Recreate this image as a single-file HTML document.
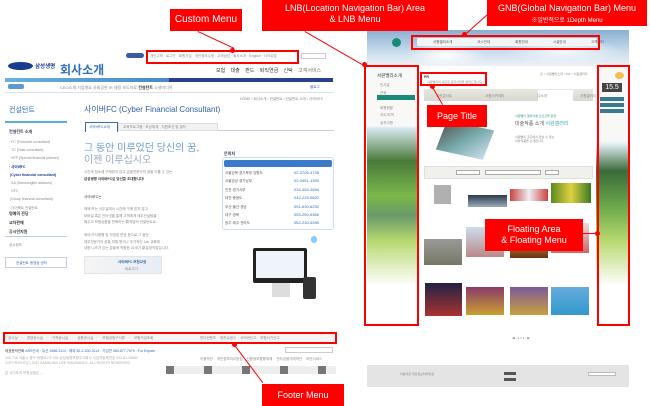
<!DOCTYPE html>
<html><head><meta charset="utf-8">
<style>
*{margin:0;padding:0;box-sizing:border-box}
body{width:650px;height:406px;overflow:hidden;background:#fff;position:relative;font-family:"Liberation Sans","Noto Sans CJK KR",sans-serif;color:#555}
.a{position:absolute}
.lab{position:absolute;background:#f00;color:#fff;text-align:center;font-size:10px;line-height:11px}
.rb{position:absolute;border:2px solid #f00}
.t{position:absolute;font-size:3.5px;color:#888;white-space:nowrap}
.ln{position:absolute;height:1px;background:#f00;transform-origin:0 0}
.dot{position:absolute;width:5px;height:5px;border-radius:50%;background:#f00}
</style></head><body>

<!-- LEFT SCREENSHOT -->
<div class="a" style="left:8px;top:62px;width:25px;height:8px;background:#1a3c8f;border-radius:50%"></div>
<div class="a" style="left:35px;top:62px;font-size:5.5px;color:#1a3c8f;font-weight:bold">삼성생명</div>
<div class="a" style="left:60px;top:61px;font-size:12px;color:#2f6fbf;font-weight:bold">회사소개</div>
<div class="a" style="left:126px;top:53px;width:18px;height:5px;background:#3a5aa8;border-radius:3px"></div>
<div class="t" style="left:150px;top:54px">개인고객 · 로그인 · 회원가입 · 개인정보수정 · 고객상담 · 회사소개 · English · 사이트맵</div>
<div class="a" style="left:301px;top:53px;width:25px;height:6px;border:1px solid #ccd"></div>
<div class="a" style="left:216px;top:67px;font-size:5px;color:#333;word-spacing:4px;white-space:nowrap">보험 대출 펀드 퇴직연금 신탁 <span style="color:#777">고객서비스</span></div>
<div class="a" style="left:5px;top:78px;width:328px;height:4px;background:linear-gradient(90deg,#6ab0e0 0%,#4a88c8 50%,#2a3f90 50%,#2a3f90 100%)"></div>
<div class="a" style="left:8px;top:84px;width:16px;height:5px;background:#5a9ad0;border-radius:2px"></div>
<div class="t" style="left:60px;top:85px;font-size:4px">CEO소개 기업개요 사회공헌 IR 채용 보도자료 <b style="color:#333">컨설턴트</b> 소셜미디어</div>
<div class="t" style="left:310px;top:85px;color:#36c">블로그</div>
<div class="a" style="left:5px;top:92px;width:328px;height:1px;background:#dde"></div>
<div class="t" style="left:240px;top:97px">HOME › 회사소개 › 컨설턴트 › 컨설턴트 소개 › 사이버FC</div>
<div class="a" style="left:9px;top:105px;font-size:7px;color:#2f6fbf">컨설턴트</div>
<div class="a" style="left:5px;top:121px;width:62px;height:2px;background:#5ab0d8"></div>
<div class="t" style="left:9px;top:129px;color:#335;font-weight:bold;font-size:4px">컨설턴트 소개</div>
<div class="t" style="left:9px;top:138px;line-height:8.2px">· FC (Financial consultant)<br>· TC (Total consultant)<br>· SFP (Special financial planner)<br><b style="color:#1a3c8f">· 사이버FC<br>&nbsp;(Cyber financial consultant)</b><br>· SA (Samsunglife advisors)<br>· GFC<br>&nbsp;(Group financial consultant)<br>· 다이렉트 컨설턴트</div>
<div class="t" style="left:9px;top:209px;color:#333;font-weight:bold;line-height:9px;font-size:4px">명예의 전당<br>교차판매<br>공시인지원</div>
<div class="a" style="left:5px;top:236px;width:62px;height:1px;background:#bcd"></div>
<div class="t" style="left:9px;top:243px">공시정보</div>
<div class="a" style="left:5px;top:257px;width:62px;height:11px;border:1px solid #ccd"></div>
<div class="t" style="left:16px;top:261px;color:#36c">컨설턴트 동영상 센터</div>

<div class="a" style="left:84px;top:104px;font-size:8px;color:#2f5fa8;white-space:nowrap">사이버FC (Cyber Financial Consultant)</div>
<div class="a" style="left:84px;top:121px;width:250px;height:10px;border-bottom:1px solid #ccd"></div>
<div class="a" style="left:85px;top:122px;width:33px;height:10px;border:1px solid #3a6ab0;border-bottom:none;background:#fff"></div>
<div class="t" style="left:89px;top:125px;color:#2f5fa8">사이버FC소개</div>
<div class="a" style="left:118px;top:123px;width:100px;height:8px;background:#f3f3f3;border:1px solid #ddd"></div>
<div class="t" style="left:123px;top:125px">교육프로그램 · 보상체계 · 지원조건 및 절차</div>
<div class="a" style="left:84px;top:143px;font-size:10px;line-height:12px;color:#6a9ad0;white-space:nowrap">그 동안 미루었던 당신의 꿈,<br><span style="color:#9ab">이젠 이루십시오</span></div>
<div class="t" style="left:84px;top:170px">사간과 장소에 구애받지 않고 금융전문가의 꿈을 이룰 수 있는</div>
<div class="t" style="left:84px;top:177px;color:#333;font-weight:bold">삼성생명 사이버FC로 당신을 초대합니다!</div>
<div class="t" style="left:84px;top:195px;color:#333">사이버FC는</div>
<div class="t" style="left:84px;top:206px;line-height:6.5px">재택 또는 사무실에서 시간에 구애 받지 않고<br>모바일 혹은 인터넷을 통해 고객에게 재무컨설팅을<br>해주고 보험상품을 판매하는 新개념의 컨설턴트로.<br><br>육아/가사병행 및 자영업 운영 등으로 그 동안<br>재무전문가의 꿈을 미뤄 왔거나 추가적인 Job 교육에<br>대한 니즈가 있는 분들께 적합한 21세기 新유망직업입니다.</div>
<div class="a" style="left:84px;top:256px;width:78px;height:18px;background:linear-gradient(90deg,#f4f4f4,#e8eef6);border:1px solid #e4e4e4"></div>
<div class="t" style="left:118px;top:260px;color:#2f5fa8;font-weight:bold">사이버FC 보험교실</div>
<div class="t" style="left:125px;top:267px">바로가기</div>

<div class="t" style="left:224px;top:151px;color:#335;font-weight:bold;font-size:4px">문의처</div>
<div class="a" style="left:222px;top:157px;width:112px;height:73px;border:1px solid #cde;border-radius:3px"></div>
<div class="a" style="left:224px;top:160px;width:108px;height:7px;background:#3a7ac8;border-radius:2px"></div>
<div class="t" style="left:225px;top:169px;line-height:8.4px;color:#555">서울강북·경기북부·강원도<br>서울강남·경기남부<br>인천·경기서부<br>대전·충청도<br>부산·울산·경남<br>대구·경북<br>광주·제주·전라도</div>
<div class="t" style="left:294px;top:169px;line-height:8.4px;color:#2f6fbf;font-size:4px">02-3706-3728<br>02-3451-1393<br>032-454-4684<br>042-229-0820<br>051-630-6230<br>053-250-5366<br>062-230-5285</div>
<div class="a" style="left:253px;top:248px;width:54px;height:35px;background:#222;border-radius:2px"></div>
<div class="a" style="left:256px;top:251px;width:48px;height:27px;background:#eef4fa"></div>
<div class="a" style="left:272px;top:283px;width:18px;height:14px;background:#ddd"></div>
<div class="a" style="left:303px;top:277px;width:13px;height:22px;background:#333;border-radius:2px"></div>
<div class="a" style="left:311px;top:236px;width:6px;height:7px;background:#8cf;border-radius:3px"></div>

<div class="a" style="left:5px;top:333px;width:330px;height:10px;background:#f4f4f4"></div>
<div class="t" style="left:8px;top:336px;word-spacing:3px">공시실 · 경영공시실 · 가격공시실 · 상품공시실 · 보험금청구서류 · 보험가입조회</div>
<div class="t" style="left:200px;top:336px;word-spacing:3px">반디컨텐츠 방카슈랑스 사이버신고 보험사기신고</div>
<div class="t" style="left:5px;top:349px;color:#333">대표문의전화 <span style="color:#36c">ARS안내 · 유선 1588-3114 · 해외 82-2-300-3114 · 가입전 080-877-7979 · For Expats</span></div>
<div class="a" style="left:285px;top:347px;width:48px;height:6px;border:1px solid #ccc"></div>
<div class="t" style="left:5px;top:356px;line-height:5px;color:#aaa">100-716 서울시 중구 태평로2가 150 삼성생명보험주식회사 사업자등록번호 202-81-26689<br>COPYRIGHT(C) 2011 SAMSUNG LIFE INSURANCE. ALL RIGHTS RESERVED.<br><br>본 사이트의 보험상품은 ...</div>
<div class="t" style="left:200px;top:357px;word-spacing:3px">이용약관 개인정보처리방침 신용정보활용체제 전자금융거래약관 보안서비스</div>
<div class="a" style="left:166px;top:366px;width:170px;height:8px;background:repeating-linear-gradient(90deg,#777 0 8px,#eee 8px 38px)"></div>

<!-- RIGHT SCREENSHOT -->
<div class="a" style="left:367px;top:30px;width:262px;height:36px;background:radial-gradient(ellipse 40px 12px at 30% 70%,#fff,transparent),radial-gradient(ellipse 60px 14px at 75% 60%,#f4f8fc,transparent),linear-gradient(180deg,#8aaed0,#c8dcec 60%,#eef2f6);"></div>
<div class="a" style="left:392px;top:38px;width:9px;height:9px;border-radius:50%;background:#1a8a78"></div>
<div class="a" style="left:417px;top:38px;width:180px;height:8px;background:#f4f4f4;border-radius:2px"></div>
<div class="t" style="left:433px;top:40px;word-spacing:24px;color:#555">서원밸리소개 코스안내 회원안내 시설안내 고객센터</div>
<div class="a" style="left:367px;top:66px;width:52px;height:260px;background:linear-gradient(180deg,#f8f8f6 0,#f8f8f6 60px,#d8e8f0 62px,#4a7a3a 95px,#7ab84a 130px,#6a9a6a 150px,#b8d870 175px,#fff 220px)"></div>
<div class="t" style="left:377px;top:73px;font-size:4.5px;color:#333">서원밸리소개</div>
<div class="t" style="left:380px;top:82px;line-height:7.5px">인사말<br>연혁<br><br>회원현황<br>지도/지역<br>공지사항</div>
<div class="a" style="left:377px;top:95px;width:38px;height:5px;background:#1a8a78"></div>
<div class="a" style="left:419px;top:66px;width:177px;height:270px;background:#fff"></div>
<div class="t" style="left:424px;top:75px;color:#333;font-weight:bold">PR</div>
<div class="t" style="left:427px;top:80px;font-size:3px">서원밸리의 새로운 공지사항을 알려드립니다</div>
<div class="t" style="left:540px;top:72px;font-size:3px">홈 &gt; 서원밸리소개 &gt; PR &gt; 서원갤러리</div>
<div class="a" style="left:424px;top:89px;width:169px;height:12px;background:linear-gradient(#e8e8e0,#d8d8d0)"></div>
<div class="a" style="left:538px;top:90px;width:35px;height:12px;background:#fff"></div>
<div class="t" style="left:436px;top:94px;word-spacing:32px">그린콘서트 서원아카데미 다소개 서원갤러리</div>
<div class="a" style="left:440px;top:125px;width:50px;height:30px;background:linear-gradient(135deg,#555,#7aa 50%,#cde);transform:skewX(-10deg) rotate(12deg)"></div>
<div class="t" style="left:515px;top:114px;color:#2a9a8a;font-size:3px">서원밸리 갤러리에 오신것을 환영</div>
<div class="t" style="left:515px;top:120px;color:#555;font-size:5px">미술작품 소개 <span style="color:#3ab">서원갤러리</span></div>
<div class="t" style="left:515px;top:135px;font-size:3px;line-height:4px">서원밸리 곳곳에서 만날 수 있는<br>미술작품을 소개합니다.</div>
<div class="a" style="left:424px;top:166px;width:169px;height:13px;background:#f0f0ec;border:1px solid #e0e0dc"></div>
<div class="a" style="left:456px;top:170px;width:24px;height:5px;background:#fff;border:1px solid #aaa"></div>
<div class="a" style="left:485px;top:170px;width:56px;height:5px;background:#fff;border:1px solid #aaa"></div>
<div class="a" style="left:545px;top:170px;width:14px;height:5px;background:#fff;border:1px solid #aaa"></div>
<div class="a" style="left:424px;top:183px;width:169px;height:142px;background:
linear-gradient(#b0b0b0,#b0b0b0) 10px 2px/17px 19px no-repeat,
linear-gradient(#2a3a4a,#9ab) 44px 12px/39px 12px no-repeat,
linear-gradient(90deg,#c44,#eee 50%,#c44) 86px 6px/38px 12px no-repeat,
linear-gradient(90deg,#5a8a20,#e0d040,#3a7a20) 127px 0/40px 20px no-repeat,
linear-gradient(#999,#776) 0 56px/38px 26px no-repeat,
linear-gradient(#cde,#b88) 42px 44px/38px 30px no-repeat,
linear-gradient(#c9a040,#6a3010) 86px 55px/38px 20px no-repeat,
linear-gradient(#edd,#c66) 127px 40px/38px 30px no-repeat,
linear-gradient(#224,#a33) 1px 100px/37px 33px no-repeat,
linear-gradient(#8a3a6a,#c9a030) 42px 104px/38px 28px no-repeat,
linear-gradient(#7a5a9a,#c9a040) 86px 104px/38px 28px no-repeat,
linear-gradient(#6ad,#39c) 127px 104px/38px 28px no-repeat"></div>
<div class="t" style="left:512px;top:336px;font-size:3px">◀ ‹ 1 2 3 › ▶</div>
<div class="a" style="left:596px;top:66px;width:33px;height:260px;background:linear-gradient(180deg,#f8f8f6 0,#f8f8f6 75px,#e0eef4 78px,#3a6a3a 105px,#6aa84a 140px,#b8d870 175px,#fff 220px)"></div>
<div class="a" style="left:615px;top:72px;width:9px;height:7px;background:#f0c050;border-radius:50%"></div>
<div class="a" style="left:602px;top:83px;width:20px;height:9px;background:#444;color:#fff;font-size:7px;line-height:9px;text-align:center">15.5</div>
<div class="a" style="left:600px;top:97px;width:24px;height:4px;background:#3a7a90"></div>
<div class="a" style="left:600px;top:103px;width:24px;height:4px;background:#3a7a90"></div>
<div class="a" style="left:600px;top:109px;width:24px;height:4px;background:#3a7a90"></div>
<div class="a" style="left:367px;top:365px;width:262px;height:22px;background:#e4e4e4"></div>
<div class="a" style="left:504px;top:372px;width:12px;height:3px;background:#555"></div>
<div class="a" style="left:504px;top:378px;width:12px;height:3px;background:#555"></div>
<div class="a" style="left:588px;top:372px;width:28px;height:4px;background:#fff;border:1px solid #bbb"></div>
<div class="t" style="left:400px;top:372px;font-size:3px">이용약관 개인정보처리방침</div>

<!-- ANNOTATIONS -->
<div class="rb" style="left:146px;top:50px;width:153px;height:14px"></div>
<div class="rb" style="left:411px;top:35px;width:189px;height:15px"></div>
<div class="rb" style="left:364px;top:65px;width:55px;height:261px"></div>
<div class="rb" style="left:420px;top:72px;width:67px;height:14px"></div>
<div class="rb" style="left:597px;top:65px;width:33px;height:261px"></div>
<div class="rb" style="left:3px;top:332px;width:334px;height:12px"></div>
<div class="lab" style="left:170px;top:9px;width:72px;height:22px;line-height:22px">Custom Menu</div>
<div class="lab" style="left:262px;top:0;width:186px;height:31px;padding-top:3px;font-size:9px">LNB(Location Navigation Bar) Area<br>&amp; LNB Menu</div>
<div class="lab" style="left:487px;top:0;width:160px;height:26px;padding-top:3px;font-size:9px">GNB(Global Navigation Bar) Menu<br><span style="font-size:6px">※일반적으로 1Depth Menu</span></div>
<div class="lab" style="left:427px;top:105px;width:60px;height:22px;line-height:22px;font-size:9px">Page Title</div>
<div class="lab" style="left:485px;top:219px;width:98px;height:32px;padding-top:5px;font-size:9px">Floating Area<br>&amp; Floating Menu</div>
<div class="lab" style="left:262px;top:384px;width:82px;height:22px;line-height:22px;font-size:9px">Footer Menu</div>
<div class="dot" style="left:230px;top:48px"></div>
<div class="ln" style="left:198px;top:31px;width:40px;transform:rotate(25deg)"></div>
<div class="dot" style="left:362px;top:62px"></div>
<div class="ln" style="left:305px;top:31px;width:66px;transform:rotate(30deg)"></div>
<div class="dot" style="left:462px;top:32px"></div>
<div class="ln" style="left:465px;top:34px;width:35px;transform:rotate(-42deg)"></div>
<div class="dot" style="left:430px;top:84px"></div>
<div class="ln" style="left:433px;top:87px;width:20px;transform:rotate(60deg)"></div>
<div class="dot" style="left:595px;top:231px"></div>
<div class="ln" style="left:583px;top:233px;width:13px"></div>
<div class="dot" style="left:232px;top:342px"></div>
<div class="ln" style="left:235px;top:345px;width:47px;transform:rotate(53deg)"></div>
</body></html>
